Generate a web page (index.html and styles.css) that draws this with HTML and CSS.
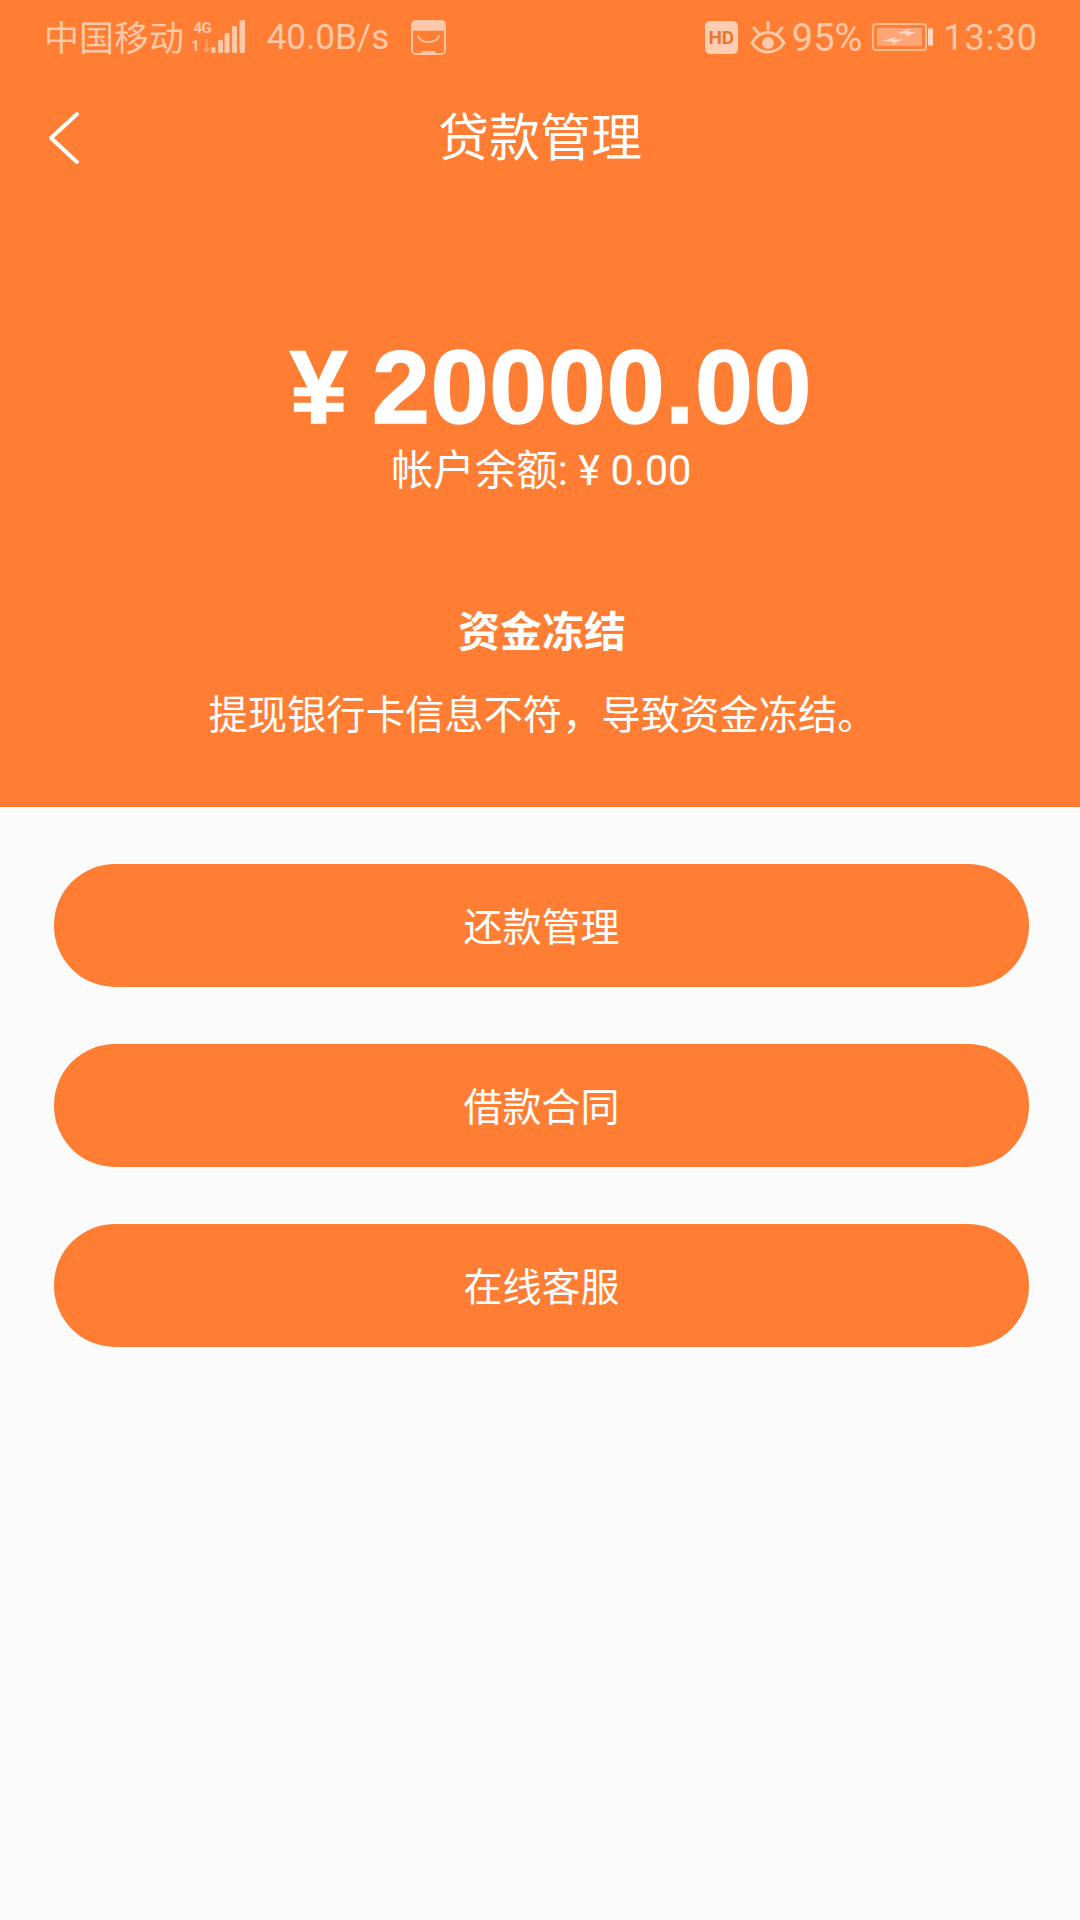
FILE: index.html
```html
<!DOCTYPE html>
<html lang="zh-CN">
<head>
    <meta charset="UTF-8">
    <meta name="viewport" content="width=device-width, initial-scale=1.0">
    <title>贷款管理</title>
    <link rel="stylesheet" href="styles.css">
</head>
<body>
    <header class="top">
        <div class="status-bar">
            <div class="status-left">
                <span class="carrier">中国移动</span>
                <span class="net-type"><span>4G</span><span>1<i class="net-arrow">↓</i></span></span>
                <svg class="signal" width="35" height="34" viewBox="0 0 35 34">
                    <rect x="1" y="27" width="4.5" height="6" rx="1"/>
                    <rect x="8" y="20" width="5" height="13" rx="1"/>
                    <rect x="14.5" y="13" width="5" height="20" rx="1"/>
                    <rect x="22" y="6" width="5" height="27" rx="1"/>
                    <rect x="29.5" y="0" width="5.5" height="33" rx="1"/>
                </svg>
                <span class="speed">40.0B/s</span>
                <svg class="shop-icon" width="35" height="35" viewBox="0 0 36 36">
                    <rect x="1" y="1" width="34" height="34" rx="4" class="shop-outline"/>
                    <path d="M1 11V5a4 4 0 0 1 4-4h26a4 4 0 0 1 4 4v6z" class="shop-lid"/>
                    <path d="M7 16c3 9 19 9 22 0" class="shop-smile"/>
                    <rect x="11" y="32" width="14" height="2" class="shop-lid"/>
                </svg>
            </div>
            <div class="status-right">
                <span class="hd">HD</span>
                <svg class="eye" width="36" height="33" viewBox="0 0 36 33">
                    <path d="M2 22c8-14 24-14 32 0c-8 12-24 12-32 0z" class="eye-line"/>
                    <circle cx="18" cy="22" r="6" class="eye-dot"/>
                    <path d="M4 7l5 6M18 1v7M32 7l-5 6" class="eye-line"/>
                </svg>
                <span class="percent">95%</span>
                <svg class="battery" width="62" height="30" viewBox="0 0 62 30">
                    <rect x="1" y="2" width="53" height="26" rx="3" class="battery-line"/>
                    <rect x="5" y="6" width="45" height="18" class="battery-fill"/>
                    <path d="M11 19l13-4l-2 3l9-1l-11 6l2-3z M26 11l12-4l-2 3l8 0l-11 5l2-3z" class="battery-bolt"/>
                    <rect x="56" y="6" width="5" height="18" rx="2" class="battery-cap"/>
                </svg>
                <span class="time">13:30</span>
            </div>
        </div>

        <div class="nav-bar">
            <svg class="back" width="32" height="54" viewBox="0 0 32 54">
                <path d="M29 3L3 27l26 24"/>
            </svg>
            <h1 class="nav-title">贷款管理</h1>
        </div>

        <div class="amount">¥ 20000.00</div>
        <div class="balance">帐户余额: ¥ 0.00</div>
        <div class="state-title">资金冻结</div>
        <div class="state-text">提现银行卡信息不符，导致资金冻结。</div>
    </header>

    <div class="actions">
        <button class="button">还款管理</button>
        <button class="button">借款合同</button>
        <button class="button">在线客服</button>
    </div>
</body>
</html>
```

FILE: styles.css
```css
body {
    margin: 0;
    padding: 0;
    height: 1920px;
    overflow: hidden;
    background-color: #fbfbfb;
    font-family: "Roboto", "Noto Sans CJK SC", sans-serif;
}
.top {
    height: 807px;
    background-color: #ff7e33;
    color: #fff;
    text-align: center;
}
.status-bar {
    height: 74px;
    padding: 0 42px 0 44px;
    display: flex;
    justify-content: space-between;
    align-items: center;
    color: #ffc8a6;
    font-size: 36px;
}
.status-left, .status-right {
    display: flex;
    align-items: center;
}
.carrier {
    margin-top: -3px;
    font-size: 35px;
}
.net-type {
    display: flex;
    flex-direction: column;
    margin-left: 7px;
    font-size: 15px;
    font-weight: 700;
    letter-spacing: -0.5px;
    line-height: 18px;
}
.net-arrow {
    font-style: normal;
    opacity: 0.5;
}
.signal {
    margin-left: -4px;
    fill: #ffc8a6;
}
.speed {
    margin-left: 22px;
    padding-top: 2px;
    font-size: 35px;
    line-height: 40px;
}
.shop-icon {
    margin-left: 22px;
}
.shop-outline, .shop-smile {
    fill: none;
    stroke: #ffc8a6;
    stroke-width: 2;
}
.shop-lid {
    fill: #ffc8a6;
}
.hd {
    width: 33px;
    height: 33px;
    border-radius: 5px;
    background-color: #ffcdb0;
    color: #e8772f;
    font-size: 19px;
    font-weight: 700;
    line-height: 33px;
    text-align: center;
}
.eye {
    margin-left: 12px;
}
.eye-line {
    fill: none;
    stroke: #ffc8a6;
    stroke-width: 3;
    stroke-linecap: round;
}
.eye-dot {
    fill: #ffc8a6;
}
.percent {
    margin-left: 6px;
    padding-top: 2px;
    font-size: 38px;
}
.battery {
    margin-left: 10px;
}
.battery-line {
    fill: none;
    stroke: #ffb98f;
    stroke-width: 2;
}
.battery-fill {
    fill: #ffa679;
}
.battery-bolt, .battery-cap {
    fill: #ffd9c2;
}
.time {
    margin-left: 9px;
    padding-top: 2px;
    letter-spacing: 1px;
}
.nav-bar {
    position: relative;
    height: 78px;
    margin-top: 26px;
    display: flex;
    justify-content: center;
    align-items: center;
}
.back {
    position: absolute;
    left: 48px;
    top: 11px;
    fill: none;
    stroke: #fff;
    stroke-width: 4;
    stroke-linecap: round;
    stroke-linejoin: round;
}
.nav-title {
    margin: 0;
    font-size: 51px;
    font-weight: 400;
    line-height: 78px;
}
.amount {
    margin-top: 153px;
    padding-left: 22px;
    font-family: "Liberation Sans", "Noto Sans CJK SC", sans-serif;
    font-size: 104px;
    font-weight: 700;
    letter-spacing: 0.8px;
    word-spacing: -6px;
    -webkit-text-stroke: 1.5px #fff;
    line-height: 112px;
}
.balance {
    margin-top: 0;
    padding-left: 3px;
    font-size: 41.6px;
    line-height: 56px;
}
.state-title {
    margin-top: 104px;
    padding-left: 4px;
    font-size: 42px;
    font-weight: 700;
    line-height: 60px;
}
.state-text {
    margin-top: 24px;
    padding-left: 5px;
    font-size: 39.3px;
    line-height: 58px;
}
.actions {
    padding: 57px 51px 0 54px;
    display: flex;
    flex-direction: column;
    gap: 57px;
}
.button {
    height: 123px;
    padding: 0 0 4px;
    border: none;
    border-radius: 61px;
    background-color: #ff7e33;
    color: #fff;
    font-family: inherit;
    font-size: 39px;
}
```
